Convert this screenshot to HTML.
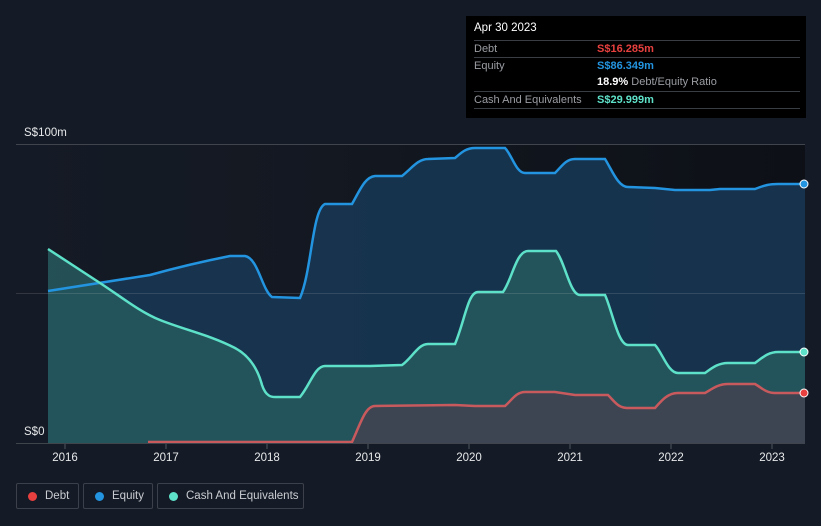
<!DOCTYPE html><html><head><style>
body{margin:0;background:#151b26;width:821px;height:526px;overflow:hidden;font-family:"Liberation Sans",sans-serif;position:relative}
.tt{position:absolute;left:466px;top:16px;width:340px;height:102px;background:#000}
.tt .r{position:absolute;left:8px;width:326px;font-size:11px;color:#9a9da3;border-top:1px solid #3a3d44;height:16px;line-height:16px;white-space:nowrap}
.lg{position:absolute;top:483px;height:26px;border:1px solid #3b404a;border-radius:2px;color:#c9ccd1;font-size:11.5px;line-height:24px;box-sizing:border-box;white-space:nowrap}
.lg i{position:absolute;left:11px;top:8px;width:9px;height:9px;border-radius:50%}
.lg span{position:absolute;left:28px}
</style></head><body>
<svg width="821" height="526" style="position:absolute;left:0;top:0">
<defs><linearGradient id="bg" x1="0" x2="1"><stop offset="0" stop-color="#151b26"/><stop offset="0.4" stop-color="#131821"/><stop offset="1" stop-color="#0d1016"/></linearGradient></defs>
<rect x="16" y="144" width="789" height="299" fill="url(#bg)"/>
<line x1="16" y1="144.5" x2="805" y2="144.5" stroke="#40444c"/>
<path d="M48,291 L150,275 C175,268 200,262 230,256 L245,256 C258,258 262,290 272,297 L300,298 C312,270 312,210 325,204 L352,204 C360,190 365,177 375,176 L402,176 C412,168 418,159 428,159 L455,158 C460,154 465,148 475,148 L505,148 C512,155 516,173 525,173 L555,173 C562,166 566,159 575,159 L605,159 C612,170 618,187 628,187 L655,188 L675,190 L710,190 L720,189 L755,189 C765,185 770,184 778,184 L805,184 L805,443 L48,443Z" fill="#173550" opacity="0.95"/>
<path d="M48,249 L100,283 C120,296 140,312 160,320 C185,330 210,335 235,348 C250,356 258,370 262,385 C266,397 272,397 275,397 L300,397 C310,385 315,366 325,366 L370,366 L402,365 C412,358 418,344 428,344 L455,344 C465,320 468,292 478,292 L503,292 C512,280 516,251 528,251 L556,251 C565,262 570,295 580,295 L605,295 C612,310 618,345 628,345 L655,345 C662,352 668,373 678,373 L705,373 C712,368 718,363 728,363 L755,363 C762,358 768,352 778,352 L805,352 L805,443 L48,443Z" fill="#275a5e" opacity="0.85"/>
<path d="M148,442 L352,442 C360,425 365,406 375,406 L455,405 L475,406 L505,406 C512,400 516,392 525,392 L555,392 L575,395 L608,395 C615,402 618,408 628,408 L655,408 C662,400 668,393 678,393 L705,393 C712,389 718,384 728,384 L755,384 C762,388 766,393 775,393 L805,393 L805,443 L148,443Z" fill="#3f4450" opacity="0.9"/>
<line x1="16" y1="293.5" x2="805" y2="293.5" stroke="#ffffff" stroke-opacity="0.12"/>
<path d="M48,291 L150,275 C175,268 200,262 230,256 L245,256 C258,258 262,290 272,297 L300,298 C312,270 312,210 325,204 L352,204 C360,190 365,177 375,176 L402,176 C412,168 418,159 428,159 L455,158 C460,154 465,148 475,148 L505,148 C512,155 516,173 525,173 L555,173 C562,166 566,159 575,159 L605,159 C612,170 618,187 628,187 L655,188 L675,190 L710,190 L720,189 L755,189 C765,185 770,184 778,184 L805,184" fill="none" stroke="#2394e0" stroke-width="2.5"/>
<path d="M48,249 L100,283 C120,296 140,312 160,320 C185,330 210,335 235,348 C250,356 258,370 262,385 C266,397 272,397 275,397 L300,397 C310,385 315,366 325,366 L370,366 L402,365 C412,358 418,344 428,344 L455,344 C465,320 468,292 478,292 L503,292 C512,280 516,251 528,251 L556,251 C565,262 570,295 580,295 L605,295 C612,310 618,345 628,345 L655,345 C662,352 668,373 678,373 L705,373 C712,368 718,363 728,363 L755,363 C762,358 768,352 778,352 L805,352" fill="none" stroke="#5ee1c9" stroke-width="2.5"/>
<path d="M148,442 L352,442 C360,425 365,406 375,406 L455,405 L475,406 L505,406 C512,400 516,392 525,392 L555,392 L575,395 L608,395 C615,402 618,408 628,408 L655,408 C662,400 668,393 678,393 L705,393 C712,389 718,384 728,384 L755,384 C762,388 766,393 775,393 L805,393" fill="none" stroke="#c85a5e" stroke-width="2.5"/>
<circle cx="804" cy="184" r="4" fill="#2394e0" stroke="#fff" stroke-width="1"/>
<circle cx="804" cy="352" r="4" fill="#5ee1c9" stroke="#fff" stroke-width="1"/>
<circle cx="804" cy="393" r="4" fill="#e8403f" stroke="#fff" stroke-width="1"/>
<line x1="16" y1="443.5" x2="805" y2="443.5" stroke="#40444c"/>
<g stroke="#50545c"><line x1="65" y1="444" x2="65" y2="449"/><line x1="166" y1="444" x2="166" y2="449"/><line x1="267" y1="444" x2="267" y2="449"/><line x1="368" y1="444" x2="368" y2="449"/><line x1="469" y1="444" x2="469" y2="449"/><line x1="570" y1="444" x2="570" y2="449"/><line x1="671" y1="444" x2="671" y2="449"/><line x1="772" y1="444" x2="772" y2="449"/></g>
<g fill="#e6e8ea" font-size="11.5" text-anchor="middle" font-family="Liberation Sans"><text x="65" y="461">2016</text><text x="166" y="461">2017</text><text x="267" y="461">2018</text><text x="368" y="461">2019</text><text x="469" y="461">2020</text><text x="570" y="461">2021</text><text x="671" y="461">2022</text><text x="772" y="461">2023</text></g>
<text x="24" y="136" fill="#e6e8ea" font-size="11.5">S$100m</text>
<text x="24" y="435" fill="#e6e8ea" font-size="11.5">S$0</text>
</svg>
<div class="tt">
<div style="position:absolute;left:8px;top:6px;color:#fff;font-size:11.5px">Apr 30 2023</div>
<div class="r" style="top:24px">Debt<b style="position:absolute;left:123px;color:#e8403f">S$16.285m</b></div>
<div class="r" style="top:41px">Equity<b style="position:absolute;left:123px;color:#2394e0">S$86.349m</b></div>
<div class="r" style="top:58px;border:0"><span style="position:absolute;left:123px"><b style="color:#fff">18.9%</b> Debt/Equity Ratio</span></div>
<div class="r" style="top:75px">Cash And Equivalents<b style="position:absolute;left:123px;color:#5ee1c9">S$29.999m</b></div>
<div class="r" style="top:92px;height:0"></div>
</div>
<div class="lg" style="left:16px;width:63px"><i style="background:#e8403f"></i><span>Debt</span></div>
<div class="lg" style="left:83px;width:70px"><i style="background:#2394e0"></i><span>Equity</span></div>
<div class="lg" style="left:157px;width:147px"><i style="background:#5ee1c9"></i><span>Cash And Equivalents</span></div>
</body></html>
